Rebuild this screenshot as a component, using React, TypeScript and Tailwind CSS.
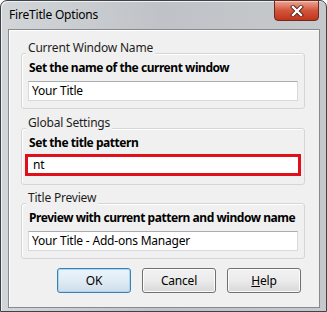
import React from 'react';

function GroupBox({
  label,
  heading,
  value,
  highlight,
  top,
}: {
  label: string;
  heading: string;
  value: string;
  highlight?: boolean;
  top: string;
}) {
  return (
    <div className={`flex flex-col ml-[12px] w-[284px] ${top}`}>
      <div className="relative z-10 ml-[5px] w-fit px-[2px] bg-[#f0f0f0] text-[12px] leading-[16px] text-[#1e1e1e]">
        {label}
      </div>
      <div className="-mt-[3px] flex flex-col rounded-[3px] border border-[#d5d5d5] shadow-[inset_1px_1px_0_#ffffff] px-[6px] pt-[6px]">
        <div className="pl-[1px] whitespace-nowrap text-[12px] font-bold leading-[16px] tracking-[-0.45px] text-black">
          {heading}
        </div>
        {highlight ? (
          <div className="-mx-[3px] mt-[3px] mb-[8px] h-[22px] flex items-center border-[3px] border-[#e0101a] bg-white pl-[5px] text-[12px] text-black">
            {value}
          </div>
        ) : (
          <div className="mt-[5px] mb-[7px] h-[20px] flex items-center border border-[#d6d9de] border-t-[#abadb3] bg-white pl-[3px] text-[12px] text-black">
            {value}
          </div>
        )}
      </div>
    </div>
  );
}

export default function App() {
  return (
    <div className="w-[327px] h-[312px] overflow-hidden font-['Noto_Sans',sans-serif] tracking-[-0.2px]">
      <div className="flex h-full flex-col rounded-t-[7px] border border-[#3f4246] bg-gradient-to-r from-[#d3d6d9] via-[#bfc3c7] to-[#c6c9cc] shadow-[inset_1px_1px_0_#eef0f2]">
        <div className="flex h-[28px] items-start justify-between">
          <div className="pl-[8px] pt-[6px] text-[12px] leading-[16px] text-black">FireTitle Options</div>
          <div className="-mt-[1px] mr-[7px] flex h-[21px] w-[45px] items-center justify-center rounded-b-[4px] border border-[#6b2a1e] bg-gradient-to-b from-[#e9a696] via-[#d3543c] to-[#c13418] shadow-[inset_0_1px_0_#f4c8bc]">
            <svg width="14" height="12" viewBox="0 0 14 12">
              <path d="M3 2 L11 10 M11 2 L3 10" stroke="#4a1a10" strokeWidth="4" strokeLinecap="square" />
              <path d="M3 2 L11 10 M11 2 L3 10" stroke="#ffffff" strokeWidth="2.4" strokeLinecap="square" />
            </svg>
          </div>
        </div>
        <div className="ml-[7px] flex h-[279px] w-[312px] flex-col border border-[#868a8f] bg-[#f0f0f0] shadow-[inset_1px_1px_0_#ffffff]">
          <GroupBox
            top="mt-[10px]"
            label="Current Window Name"
            heading="Set the name of the current window"
            value="Your Title"
          />
          <GroupBox
            top="mt-[6px]"
            label="Global Settings"
            heading="Set the title pattern"
            value="nt"
            highlight
          />
          <GroupBox
            top="mt-[5px]"
            label="Title Preview"
            heading="Preview with current pattern and window name"
            value="Your Title - Add-ons Manager"
          />
          <div className="ml-[48px] mt-[9px] flex gap-[11px] text-[12px] text-black">
            <button className="h-[25px] w-[74px] rounded-[3px] border border-[#3c7fb1] bg-gradient-to-b from-[#eaf4fb] via-[#e0ecf5] to-[#cfdde8] shadow-[inset_0_0_0_1px_#a9d8f0]">
              OK
            </button>
            <button className="h-[25px] w-[74px] rounded-[3px] border border-[#707070] bg-gradient-to-b from-[#f2f2f2] via-[#ebebeb] to-[#d8d8d8] shadow-[inset_0_0_0_1px_#fcfcfc]">
              Cancel
            </button>
            <button className="h-[25px] w-[74px] rounded-[3px] border border-[#707070] bg-gradient-to-b from-[#f2f2f2] via-[#ebebeb] to-[#d8d8d8] shadow-[inset_0_0_0_1px_#fcfcfc]">
              <span className="underline">H</span>elp
            </button>
          </div>
        </div>
      </div>
    </div>
  );
}
